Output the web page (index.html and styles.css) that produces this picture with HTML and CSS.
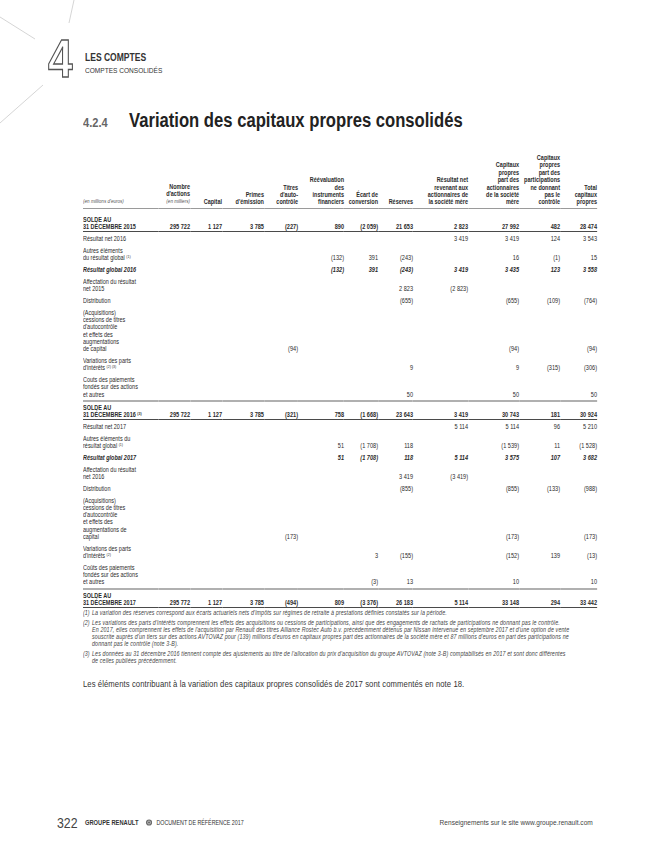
FILE: index.html
```html
<!DOCTYPE html>
<html lang="fr">
<head>
<meta charset="utf-8">
<title>Variation des capitaux propres consolidés</title>
<link rel="stylesheet" href="styles.css">
</head>
<body>
<div class="page">
  <svg class="deco" width="90" height="130" viewBox="0 0 90 130" aria-hidden="true">
    <line x1="74" y1="0" x2="69" y2="23" />
    <line x1="0" y1="17" x2="35" y2="39" />
    <line x1="43" y1="85" x2="0" y2="123" />
  </svg>

  <header class="chapter">
    <div class="chapter-num"><span class="digit">4</span></div>
    <div class="chapter-text narrow-left">
      <div class="chapter-title">LES COMPTES</div>
      <div class="chapter-sub">COMPTES CONSOLIDÉS</div>
    </div>
  </header>

  <main class="content">
    <h1 class="title narrow-left"><span class="title-num">4.2.4</span><span class="title-text">Variation des capitaux propres consolidés</span></h1>

    <div class="sheet">
    <table class="eq">
      <colgroup>
        <col class="w-lbl"><col class="w-nb"><col class="w-cap"><col class="w-pri"><col class="w-tit"><col class="w-rev"><col class="w-eca"><col class="w-res"><col class="w-rn"><col class="w-ca"><col class="w-cp"><col class="w-tot">
      </colgroup>
      <thead>
        <tr>
          <th class="lbl"><span class="unit">(en millions d'euros)</span></th>
          <th>Nombre<br>d'actions<br><span class="unit">(en milliers)</span></th>
          <th>Capital</th>
          <th>Primes<br>d'émission</th>
          <th>Titres<br>d'auto-<br>contrôle</th>
          <th>Réévaluation<br>des<br>instruments<br>financiers</th>
          <th>Écart de<br>conversion</th>
          <th>Réserves</th>
          <th>Résultat net<br>revenant aux<br>actionnaires de<br>la société mère</th>
          <th>Capitaux<br>propres<br>part des<br>actionnaires<br>de la société<br>mère</th>
          <th>Capitaux<br>propres<br>part des<br>participations<br>ne donnant<br>pas le<br>contrôle</th>
          <th>Total<br>capitaux<br>propres</th>
        </tr>
      </thead>
      <tbody>
        <tr class="solde first">
          <td class="lbl">SOLDE AU<br>31 DÉCEMBRE 2015</td>
          <td>295 722</td><td>1 127</td><td>3 785</td><td>(227)</td><td>890</td><td>(2 059)</td><td>21 653</td><td>2 823</td><td>27 992</td><td>482</td><td>28 474</td>
        </tr>
        <tr>
          <td class="lbl">Résultat net 2016</td>
          <td></td><td></td><td></td><td></td><td></td><td></td><td></td><td>3 419</td><td>3 419</td><td>124</td><td>3 543</td>
        </tr>
        <tr>
          <td class="lbl">Autres éléments<br>du résultat global <span class="fn">(1)</span></td>
          <td></td><td></td><td></td><td></td><td>(132)</td><td>391</td><td>(243)</td><td></td><td>16</td><td>(1)</td><td>15</td>
        </tr>
        <tr class="glob">
          <td class="lbl">Résultat global 2016</td>
          <td></td><td></td><td></td><td></td><td>(132)</td><td>391</td><td>(243)</td><td>3 419</td><td>3 435</td><td>123</td><td>3 558</td>
        </tr>
        <tr>
          <td class="lbl">Affectation du résultat<br>net 2015</td>
          <td></td><td></td><td></td><td></td><td></td><td></td><td>2 823</td><td>(2 823)</td><td></td><td></td><td></td>
        </tr>
        <tr>
          <td class="lbl">Distribution</td>
          <td></td><td></td><td></td><td></td><td></td><td></td><td>(655)</td><td></td><td>(655)</td><td>(109)</td><td>(764)</td>
        </tr>
        <tr>
          <td class="lbl">(Acquisitions)<br>cessions de titres<br>d'autocontrôle<br>et effets des<br>augmentations<br>de capital</td>
          <td></td><td></td><td></td><td>(94)</td><td></td><td></td><td></td><td></td><td>(94)</td><td></td><td>(94)</td>
        </tr>
        <tr>
          <td class="lbl">Variations des parts<br>d'intérêts <span class="fn">(2) (3)</span></td>
          <td></td><td></td><td></td><td></td><td></td><td></td><td>9</td><td></td><td>9</td><td>(315)</td><td>(306)</td>
        </tr>
        <tr>
          <td class="lbl">Couts des paiements<br>fondés sur des actions<br>et autres</td>
          <td></td><td></td><td></td><td></td><td></td><td></td><td>50</td><td></td><td>50</td><td></td><td>50</td>
        </tr>
        <tr class="solde mid">
          <td class="lbl">SOLDE AU<br>31 DÉCEMBRE 2016 <span class="fn">(3)</span></td>
          <td>295 722</td><td>1 127</td><td>3 785</td><td>(321)</td><td>758</td><td>(1 668)</td><td>23 643</td><td>3 419</td><td>30 743</td><td>181</td><td>30 924</td>
        </tr>
        <tr>
          <td class="lbl">Résultat net 2017</td>
          <td></td><td></td><td></td><td></td><td></td><td></td><td></td><td>5 114</td><td>5 114</td><td>96</td><td>5 210</td>
        </tr>
        <tr>
          <td class="lbl">Autres éléments du<br>résultat global <span class="fn">(1)</span></td>
          <td></td><td></td><td></td><td></td><td>51</td><td>(1 708)</td><td>118</td><td></td><td>(1 539)</td><td>11</td><td>(1 528)</td>
        </tr>
        <tr class="glob">
          <td class="lbl">Résultat global 2017</td>
          <td></td><td></td><td></td><td></td><td>51</td><td>(1 708)</td><td>118</td><td>5 114</td><td>3 575</td><td>107</td><td>3 682</td>
        </tr>
        <tr>
          <td class="lbl">Affectation du résultat<br>net 2016</td>
          <td></td><td></td><td></td><td></td><td></td><td></td><td>3 419</td><td>(3 419)</td><td></td><td></td><td></td>
        </tr>
        <tr>
          <td class="lbl">Distribution</td>
          <td></td><td></td><td></td><td></td><td></td><td></td><td>(855)</td><td></td><td>(855)</td><td>(133)</td><td>(988)</td>
        </tr>
        <tr>
          <td class="lbl">(Acquisitions)<br>cessions de titres<br>d'autocontrôle<br>et effets des<br>augmentations de<br>capital</td>
          <td></td><td></td><td></td><td>(173)</td><td></td><td></td><td></td><td></td><td>(173)</td><td></td><td>(173)</td>
        </tr>
        <tr>
          <td class="lbl">Variations des parts<br>d'intérêts <span class="fn">(2)</span></td>
          <td></td><td></td><td></td><td></td><td></td><td>3</td><td>(155)</td><td></td><td>(152)</td><td>139</td><td>(13)</td>
        </tr>
        <tr>
          <td class="lbl">Coûts des paiements<br>fondés sur des actions<br>et autres</td>
          <td></td><td></td><td></td><td></td><td></td><td>(3)</td><td>13</td><td></td><td>10</td><td></td><td>10</td>
        </tr>
        <tr class="solde mid">
          <td class="lbl">SOLDE AU<br>31 DÉCEMBRE 2017</td>
          <td>295 772</td><td>1 127</td><td>3 785</td><td>(494)</td><td>809</td><td>(3 376)</td><td>26 183</td><td>5 114</td><td>33 148</td><td>294</td><td>33 442</td>
        </tr>
      </tbody>
    </table>

    <div class="notes">
      <div class="note"><span class="note-n">(1)</span><span class="note-t">La variation des réserves correspond aux écarts actuariels nets d'impôts sur régimes de retraite à prestations définies constatés sur la période.</span></div>
      <div class="note"><span class="note-n">(2)</span><span class="note-t">Les variations des parts d'intérêts comprennent les effets des acquisitions ou cessions de participations, ainsi que des engagements de rachats de participations ne donnant pas le contrôle.<br>En 2017, elles comprennent les effets de l'acquisition par Renault des titres Alliance Rostec Auto b.v. précédemment détenus par Nissan intervenue en septembre 2017 et d'une option de vente<br>souscrite auprès d'un tiers sur des actions AVTOVAZ pour (139) millions d'euros en capitaux propres part des actionnaires de la société mère et 87 millions d'euros en part des participations ne<br>donnant pas le contrôle (note 3-B).</span></div>
      <div class="note"><span class="note-n">(3)</span><span class="note-t">Les données au 31 décembre 2016 tiennent compte des ajustements au titre de l'allocation du prix d'acquisition du groupe AVTOVAZ (note 3-B) comptabilisés en 2017 et sont donc différentes<br>de celles publiées précédemment.</span></div>
    </div>

    <p class="comment">Les éléments contribuant à la variation des capitaux propres consolidés de 2017 sont commentés en note 18.</p>
    </div>
  </main>

  <footer class="footer">
    <div class="foot-left narrow-left">
      <span class="pg">322</span>
      <span class="brand">GROUPE RENAULT</span>
      <svg class="dot" width="8.5" height="7" viewBox="0 0 7 7" preserveAspectRatio="none" aria-hidden="true">
        <circle cx="3.5" cy="3.5" r="3.1" fill="#6b6b6b" />
        <circle cx="3.5" cy="3.5" r="1.5" fill="none" stroke="#d6d6d6" stroke-width="0.7" />
      </svg>
      <span class="doc">DOCUMENT DE RÉFÉRENCE 2017</span>
    </div>
    <span class="site">Renseignements sur le site www.groupe.renault.com</span>
  </footer>
</div>
</body>
</html>
```

FILE: styles.css
```css
* { box-sizing: border-box; }

body {
  margin: 0;
  background: #fff;
  color: #333;
  font-family: "Liberation Sans", Arial, sans-serif;
}

/* The document is set in a narrow face: text blocks are Liberation Sans
   condensed horizontally (0.82) to the proportions of Arial Narrow.
   Widths inside a condensed block are given in un-condensed px. */
.narrow-left {
  transform: scaleX(0.82);
  transform-origin: 0 0;
}

.page {
  position: relative;
  width: 650px;
  min-height: 848px;
  display: flex;
  flex-direction: column;
}

.deco {
  position: absolute;
  left: 0;
  top: 0;
}
.deco line {
  stroke: #cacaca;
  stroke-width: 0.8;
}

/* chapter header */
.chapter {
  display: flex;
  margin: 31px 0 0 48px;
  height: 54px;
}
.chapter-num {
  flex: none;
  width: 37px;
}
.digit {
  display: inline-block;
  font-size: 54px;
  line-height: 54px;
  font-weight: 700;
  color: transparent;
  -webkit-text-stroke: 1.3px #555;
  transform: scaleX(0.82);
  transform-origin: 0 0;
}
.chapter-text {
  margin-top: 21px;
}
.chapter-title {
  font-size: 10.4px;
  line-height: 12px;
  font-weight: 700;
  color: #333;
}
.chapter-sub {
  font-size: 8px;
  line-height: 13px;
  color: #333;
}

.content {
  padding: 0 53px 0 83px;
}

.title {
  display: flex;
  align-items: baseline;
  margin: 23px 0 0;
  height: 24px;
}
.title-num {
  flex: none;
  width: 56.1px;
  font-size: 13.5px;
  font-weight: 700;
  color: #666;
}
.title-text {
  white-space: nowrap;
  font-size: 20.3px;
  line-height: 24px;
  font-weight: 700;
  color: #222;
}

/* condensed block holding table, notes and comment:
   layout box 12px..639px, drawn at 83px..597px */
.sheet {
  width: 626.83px;
  margin-left: -71px;
  transform: scaleX(0.82);
  transform-origin: 394.44px 0;
}

/* table */
.eq {
  width: 626.83px;
  margin-top: 22px;
  border-collapse: collapse;
  table-layout: fixed;
  color: #2b2b2b;
}
.w-lbl { width: 91.5px; }
.w-nb { width: 39px; }
.w-cap { width: 39px; }
.w-pri { width: 51.2px; }
.w-tit { width: 41.5px; }
.w-rev { width: 56.1px; }
.w-eca { width: 41.5px; }
.w-res { width: 42.7px; }
.w-rn { width: 67.1px; }
.w-ca { width: 62.2px; }
.w-cp { width: 50px; }
.w-tot { width: 45.03px; }

.eq th {
  vertical-align: bottom;
  text-align: right;
  font-size: 6.7px;
  line-height: 7.4px;
  font-weight: 700;
  padding: 0 0 2.5px;
  white-space: nowrap;
  border-bottom: 0.8px solid #9a9a9a;
}
.eq th.lbl {
  text-align: left;
}
.unit {
  font-size: 5.6px;
  font-weight: 400;
  font-style: italic;
  color: #555;
}

.eq td {
  vertical-align: bottom;
  text-align: right;
  font-size: 6.8px;
  line-height: 7.2px;
  padding: 2.4px 0;
  white-space: nowrap;
}
.eq td.lbl {
  text-align: left;
  font-size: 6.7px;
}
.fn {
  font-size: 4.3px;
  vertical-align: 2px;
  line-height: 0;
}

.eq tr.glob td {
  font-weight: 700;
  font-style: italic;
}
.eq tr.solde td {
  font-weight: 700;
  padding: 1.6px 0 1px;
  border-bottom: 1.6px solid #4a4a4a;
}
.eq tr.solde.first td {
  padding-top: 6.5px;
}
.eq tr.solde.mid td {
  border-top: 2px solid #b0b0b0;
}

/* footnotes */
.notes {
  margin-top: 2px;
  font-size: 6.5px;
  line-height: 6.9px;
  letter-spacing: 0.15px;
  font-style: italic;
  color: #444;
}
.note {
  display: flex;
  margin-bottom: 3px;
}
.note-n {
  flex: none;
  width: 11px;
  letter-spacing: 0;
}
.note-t {
  white-space: nowrap;
}

.comment {
  margin: 15px 0 0;
  font-size: 9.4px;
  line-height: 10px;
  letter-spacing: 0.1px;
  color: #333;
}

/* footer */
.footer {
  margin-top: auto;
  margin-bottom: 19px;
  display: flex;
  align-items: center;
  justify-content: space-between;
  height: 14px;
  padding: 0 57px;
}
.foot-left {
  display: flex;
  align-items: center;
}
.pg {
  width: 34.1px;
  font-size: 15px;
  color: #444;
}
.brand {
  font-size: 7px;
  font-weight: 700;
  color: #333;
}
.dot {
  margin: 0 4.9px 0 8.5px;
}
.doc {
  font-size: 6.5px;
  color: #333;
}
.site {
  display: inline-block;
  font-size: 8px;
  color: #444;
  white-space: nowrap;
  transform: scaleX(0.82);
  transform-origin: 100% 0;
}
```
